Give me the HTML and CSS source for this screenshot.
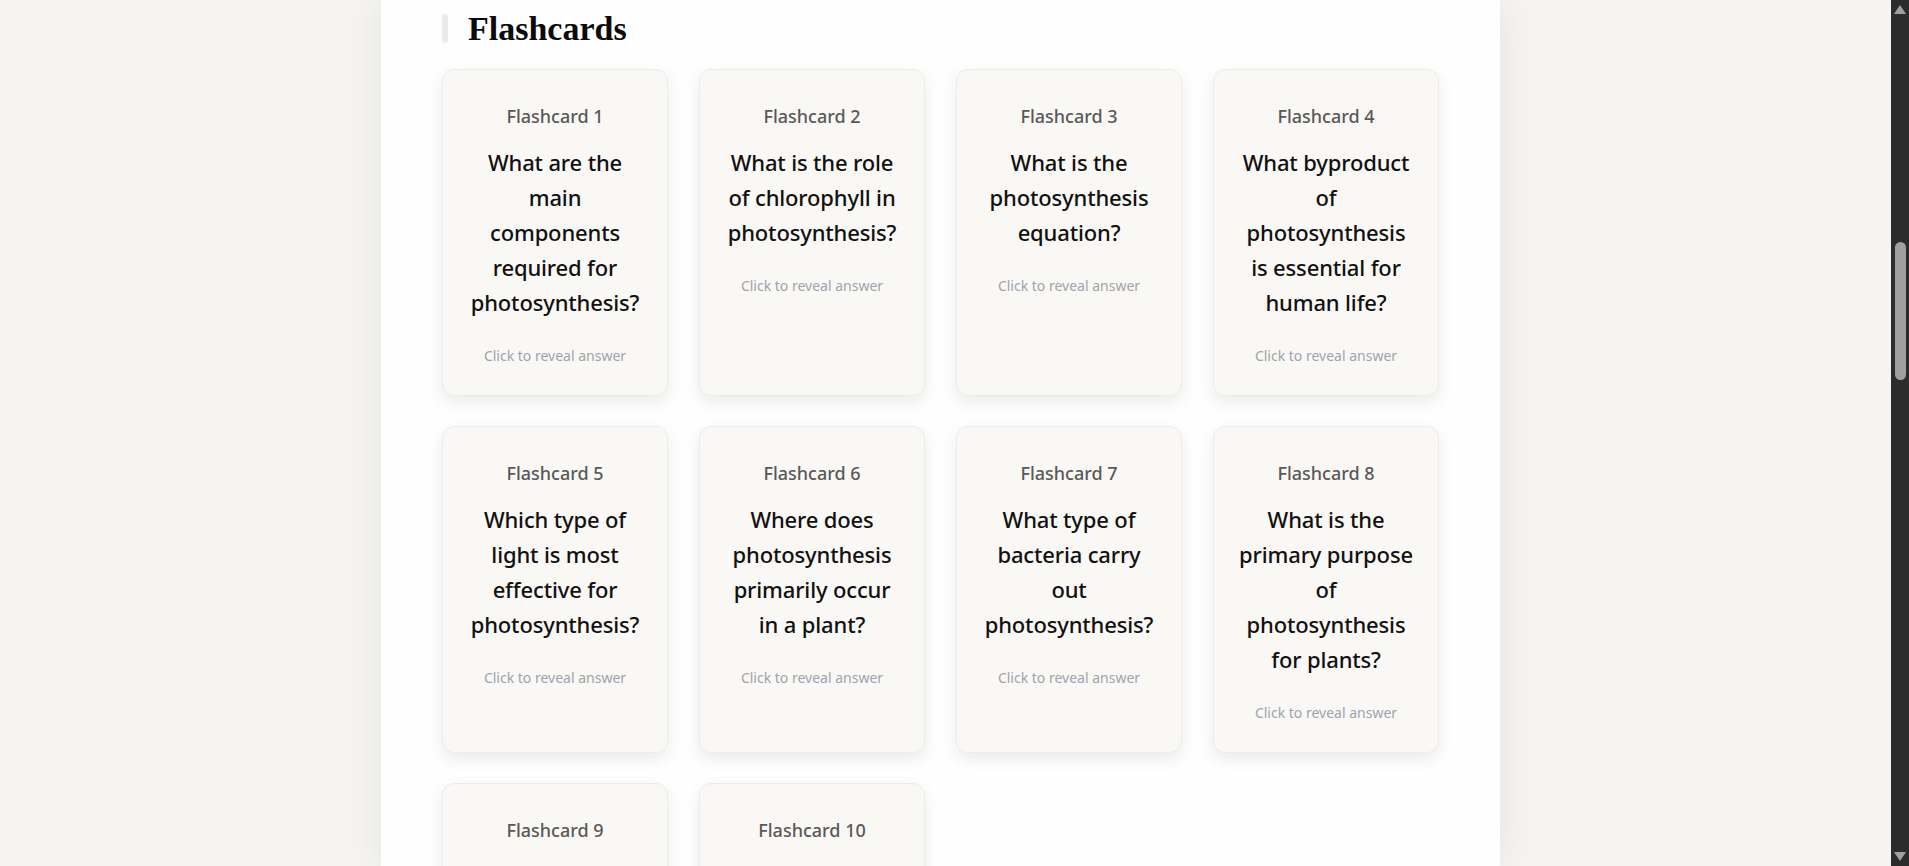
FILE: index.html
```html
<!DOCTYPE html>
<html lang="en">
<head>
<meta charset="utf-8">
<title>Flashcards</title>
<link rel="stylesheet" href="styles.css">
</head>
<body>
<div class="window">
  <main class="page">
    <section class="panel">
      <div class="section-head">
        <span class="section-bar"></span>
        <h2 class="section-title">Flashcards</h2>
      </div>
      <div class="card-grid">
        <div class="card">
          <div class="card-label">Flashcard 1</div>
          <div class="card-question">What are the main components required for photosynthesis?</div>
          <div class="card-hint">Click to reveal answer</div>
        </div>
        <div class="card">
          <div class="card-label">Flashcard 2</div>
          <div class="card-question">What is the role of chlorophyll in photosynthesis?</div>
          <div class="card-hint">Click to reveal answer</div>
        </div>
        <div class="card">
          <div class="card-label">Flashcard 3</div>
          <div class="card-question">What is the photosynthesis equation?</div>
          <div class="card-hint">Click to reveal answer</div>
        </div>
        <div class="card">
          <div class="card-label">Flashcard 4</div>
          <div class="card-question">What byproduct of photosynthesis is essential for human life?</div>
          <div class="card-hint">Click to reveal answer</div>
        </div>
        <div class="card">
          <div class="card-label">Flashcard 5</div>
          <div class="card-question">Which type of light is most effective for photosynthesis?</div>
          <div class="card-hint">Click to reveal answer</div>
        </div>
        <div class="card">
          <div class="card-label">Flashcard 6</div>
          <div class="card-question">Where does photosynthesis primarily occur in a plant?</div>
          <div class="card-hint">Click to reveal answer</div>
        </div>
        <div class="card">
          <div class="card-label">Flashcard 7</div>
          <div class="card-question">What type of bacteria carry out photosynthesis?</div>
          <div class="card-hint">Click to reveal answer</div>
        </div>
        <div class="card">
          <div class="card-label">Flashcard 8</div>
          <div class="card-question">What is the primary purpose of photosynthesis for plants?</div>
          <div class="card-hint">Click to reveal answer</div>
        </div>
        <div class="card card-partial">
          <div class="card-label">Flashcard 9</div>
        </div>
        <div class="card card-partial">
          <div class="card-label">Flashcard 10</div>
        </div>
      </div>
    </section>
  </main>
  <div class="scrollbar">
    <span class="arrow arrow-up"></span>
    <div class="track">
      <span class="thumb"></span>
    </div>
    <span class="arrow arrow-down"></span>
  </div>
</div>
</body>
</html>
```

FILE: styles.css
```css
* { box-sizing: border-box; }

html, body {
  margin: 0;
  padding: 0;
  height: 866px;
  overflow: hidden;
  background: #f5f4f0;
  font-family: "Noto Sans", "Open Sans", sans-serif;
}

.window {
  display: flex;
  height: 866px;
}

.page {
  flex: 1;
  display: flex;
  justify-content: center;
  padding-right: 10px;
  overflow: hidden;
}

.panel {
  width: 1119px;
  flex: none;
  background: #fefefe;
  box-shadow: 0 0 40px rgba(0, 0, 0, 0.07);
  padding: 14px 61px 0 61px;
}

.section-head {
  display: flex;
  align-items: center;
  gap: 20px;
  height: 29px;
}

.section-bar {
  width: 6px;
  height: 29px;
  border-radius: 3px;
  background: #ebebeb;
}

.section-title {
  margin: 0;
  font-family: "Liberation Serif", "Times New Roman", serif;
  font-weight: 700;
  font-size: 34px;
  line-height: 29px;
  color: #0a0a0a;
}

.card-grid {
  margin-top: 26px;
  display: grid;
  grid-template-columns: repeat(4, 1fr);
  column-gap: 31px;
  row-gap: 30px;
}

.card {
  background: #f9f8f5;
  border: 1px solid #eeece8;
  border-radius: 12px;
  box-shadow: 0 6px 16px rgba(0, 0, 0, 0.08);
  padding: 33px 23px 29px;
  text-align: center;
}

.card-partial {
  min-height: 120px;
}

.card-label {
  font-size: 18px;
  line-height: 27px;
  font-weight: 500;
  color: #595959;
}

.card-question {
  margin-top: 15px;
  font-size: 22px;
  line-height: 35px;
  font-weight: 500;
  letter-spacing: -0.15px;
  color: #111111;
}

.card-hint {
  margin-top: 25px;
  font-size: 14px;
  line-height: 21px;
  color: #9ea3ad;
}

.scrollbar {
  width: 18px;
  flex: none;
  background: #2c2c2c;
  display: flex;
  flex-direction: column;
  align-items: center;
  padding: 5px 0;
}

.arrow {
  width: 0;
  height: 0;
  border-left: 6px solid transparent;
  border-right: 6px solid transparent;
}

.arrow-up {
  border-bottom: 9px solid #a0a0a0;
}

.arrow-down {
  border-top: 9px solid #a0a0a0;
}

.track {
  flex: 1;
  width: 100%;
  display: flex;
  justify-content: center;
  padding-top: 228px;
}

.thumb {
  width: 11px;
  height: 138px;
  border-radius: 6px;
  background: #a0a0a0;
}
```
